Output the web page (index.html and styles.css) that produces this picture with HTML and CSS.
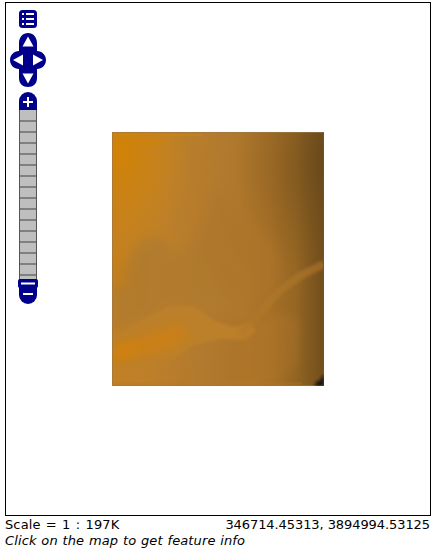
FILE: index.html
```html
<!DOCTYPE html>
<html lang="en">
<head>
<meta charset="utf-8">
<title>Map preview</title>
<link rel="stylesheet" href="styles.css">
</head>
<body>
<main class="page">
  <div class="map">
    <svg class="layer" width="212" height="254" viewBox="0 0 212 254">
      <defs>
        <linearGradient id="base" x1="0" y1="0" x2="1" y2="0.12">
          <stop offset="0" stop-color="#c48120"/>
          <stop offset=".28" stop-color="#bd802a"/>
          <stop offset=".52" stop-color="#b27a2e"/>
          <stop offset=".8" stop-color="#a87127"/>
          <stop offset="1" stop-color="#966824"/>
        </linearGradient>
        <linearGradient id="edge" x1="0" y1="0" x2="1" y2="0">
          <stop offset="0" stop-color="#604018" stop-opacity="0"/>
          <stop offset=".5" stop-color="#604018" stop-opacity=".12"/>
          <stop offset="1" stop-color="#593c17" stop-opacity=".6"/>
        </linearGradient>
        <radialGradient id="glow"><stop offset="0" stop-color="#d08307"/><stop offset="1" stop-color="#cc8213" stop-opacity="0"/></radialGradient>
        <radialGradient id="shade"><stop offset="0" stop-color="#62451a" stop-opacity=".6"/><stop offset="1" stop-color="#694a1b" stop-opacity="0"/></radialGradient>
        <filter id="soft" x="-30%" y="-30%" width="160%" height="160%"><feGaussianBlur stdDeviation="5"/></filter>
        <filter id="fine" x="-20%" y="-20%" width="140%" height="140%"><feGaussianBlur stdDeviation="1.8"/></filter>
      </defs>
      <rect width="212" height="254" fill="url(#base)"/>
      <ellipse cx="8" cy="24" rx="68" ry="105" fill="url(#glow)"/>
      <path d="M0 142 L15 128 L32 107 L48 105 L62 120 L82 112 L98 83 L105 102 L143 145 L136 190 L108 178 L73 172 L35 187 L0 202Z" fill="#b07a2e" opacity=".8" filter="url(#soft)"/>
      <path d="M105 58 L132 84 L165 106 L171 148 L137 189 L104 151 L84 115Z" fill="#ad742a" opacity=".5" filter="url(#soft)"/>
      <ellipse cx="5" cy="137" rx="12" ry="20" fill="#c88017" opacity=".55" filter="url(#soft)"/>
      <path d="M0 208 L37 185 L58 174 L83 175 L104 190 L122 195 L138 191 L144 198 L134 208 L110 207 L83 212 L62 226 L31 231 L0 238Z" fill="#bd802b" filter="url(#fine)"/>
      <path d="M0 221 L24 207 L48 198 L68 193 L76 204 L61 216 L30 224 L0 231Z" fill="#cb8018" opacity=".9" filter="url(#soft)"/>
      <path d="M0 215 L24 209 L26 219 L0 229Z" fill="#d0810d" filter="url(#soft)"/>
      <path d="M130 202 L170 180 L189 188 L187 230 L166 254 L126 254Z" fill="#b3782a" opacity=".45" filter="url(#soft)"/>
      <rect x="156" width="56" height="254" fill="url(#edge)"/>
      <ellipse cx="214" cy="30" rx="92" ry="115" fill="url(#shade)"/>
      <path d="M128 202 Q142 190 155 173 T190 143 L212 132" fill="none" stroke="#b1782c" stroke-width="8" opacity=".6" filter="url(#fine)"/>
      <path d="M0 3H90" stroke="#cc850f" stroke-width="2" opacity=".5"/>
      <path d="M5 11H53" stroke="#d08500" stroke-width="3" opacity=".6"/>
      <path d="M0 251.5H190" stroke="#bd7820" stroke-width="3" opacity=".25"/>
      <path d="M0 .5H212M.5 0V254M0 253.5H212" stroke="#9d7546" opacity=".65"/>
      <path d="M211.5 0V254" stroke="#665844" opacity=".75"/>
      <path d="M202 254L205 249H208L210 244H212V254Z" fill="#17130e" filter="url(#fine)"/>
    </svg>
    <svg class="controls" width="40" height="298" viewBox="8 8 40 298">
      <rect x="19" y="10" width="18" height="18" rx="3.5" fill="#00008b"/>
      <path d="M22 14H24M26 14H34M22 19H24M26 19H34M22 24H24M26 24H34" stroke="#fff" stroke-width="2"/>
      <path d="M19 51V43C19 37 23 33 28 33S37 37 37 43V51C42 51 46 55 46 60S42 69 37 69V78C37 84 33 87 28 87S19 84 19 78V69C14 69 10 65 10 60S14 51 19 51Z" fill="#00008b"/>
      <path d="M28 36.5L33.5 46.5H22.5ZM28 83.5L33.5 73.5H22.5ZM13 60L23 54.5V65.5ZM43 60L33 54.5V65.5Z" fill="#fff"/>
      <path d="M19 110V101A9 9 0 0 1 37 101V110Z" fill="#00008b"/>
      <path d="M23 102H33M28 97V107" stroke="#fff" stroke-width="2"/>
      <rect x="19" y="110" width="18" height="177" fill="#bfbfbf"/>
      <path d="M19 121H37M19 132H37M19 143H37M19 154H37M19 165H37M19 176H37M19 187H37M19 198H37M19 209H37M19 220H37M19 231H37M19 242H37M19 253H37M19 264H37M19 275H37" stroke="#808080" stroke-width="2"/>
      <path d="M19.5 110V286M36.5 110V286" stroke="#555"/>
      <path d="M19 286V295A9 9 0 0 0 37 295V286Z" fill="#00008b"/>
      <rect x="18" y="279" width="20" height="9" rx="2" fill="#00008b"/>
      <path d="M21 283.5H35M23 294H33" stroke="#fff" stroke-width="2"/>
    </svg>
  </div>
  <div class="status"><span class="scale">Scale = 1 : 197K</span><span class="location">346714.45313, 3894994.53125</span></div>
  <div class="hint">Click on the map to get feature info</div>
</main>
</body>
</html>
```
FILE: styles.css
```css
body {
  margin: 0;
  background: #fff;
  color: #000;
  font: 13px/16px "DejaVu Sans", Verdana, sans-serif;
}
.page {
  width: 426px;
  padding: 2px 0 0 5px;
}
.map {
  position: relative;
  box-sizing: border-box;
  height: 514px;
  margin-bottom: 1px;
  padding: 129px 0 0 106px;
  border: 1px solid #000;
}
.layer {
  display: block;
}
.controls {
  position: absolute;
  left: 2px;
  top: 5px;
}
.status {
  display: flex;
  justify-content: space-between;
  padding-right: 1px;
  white-space: nowrap;
}
.scale {
  letter-spacing: 0.12px;
  word-spacing: 1px;
}
.location {
  letter-spacing: -0.08px;
}
.hint {
  font-style: italic;
  letter-spacing: 0.12px;
  word-spacing: 0.5px;
  white-space: nowrap;
}
```
